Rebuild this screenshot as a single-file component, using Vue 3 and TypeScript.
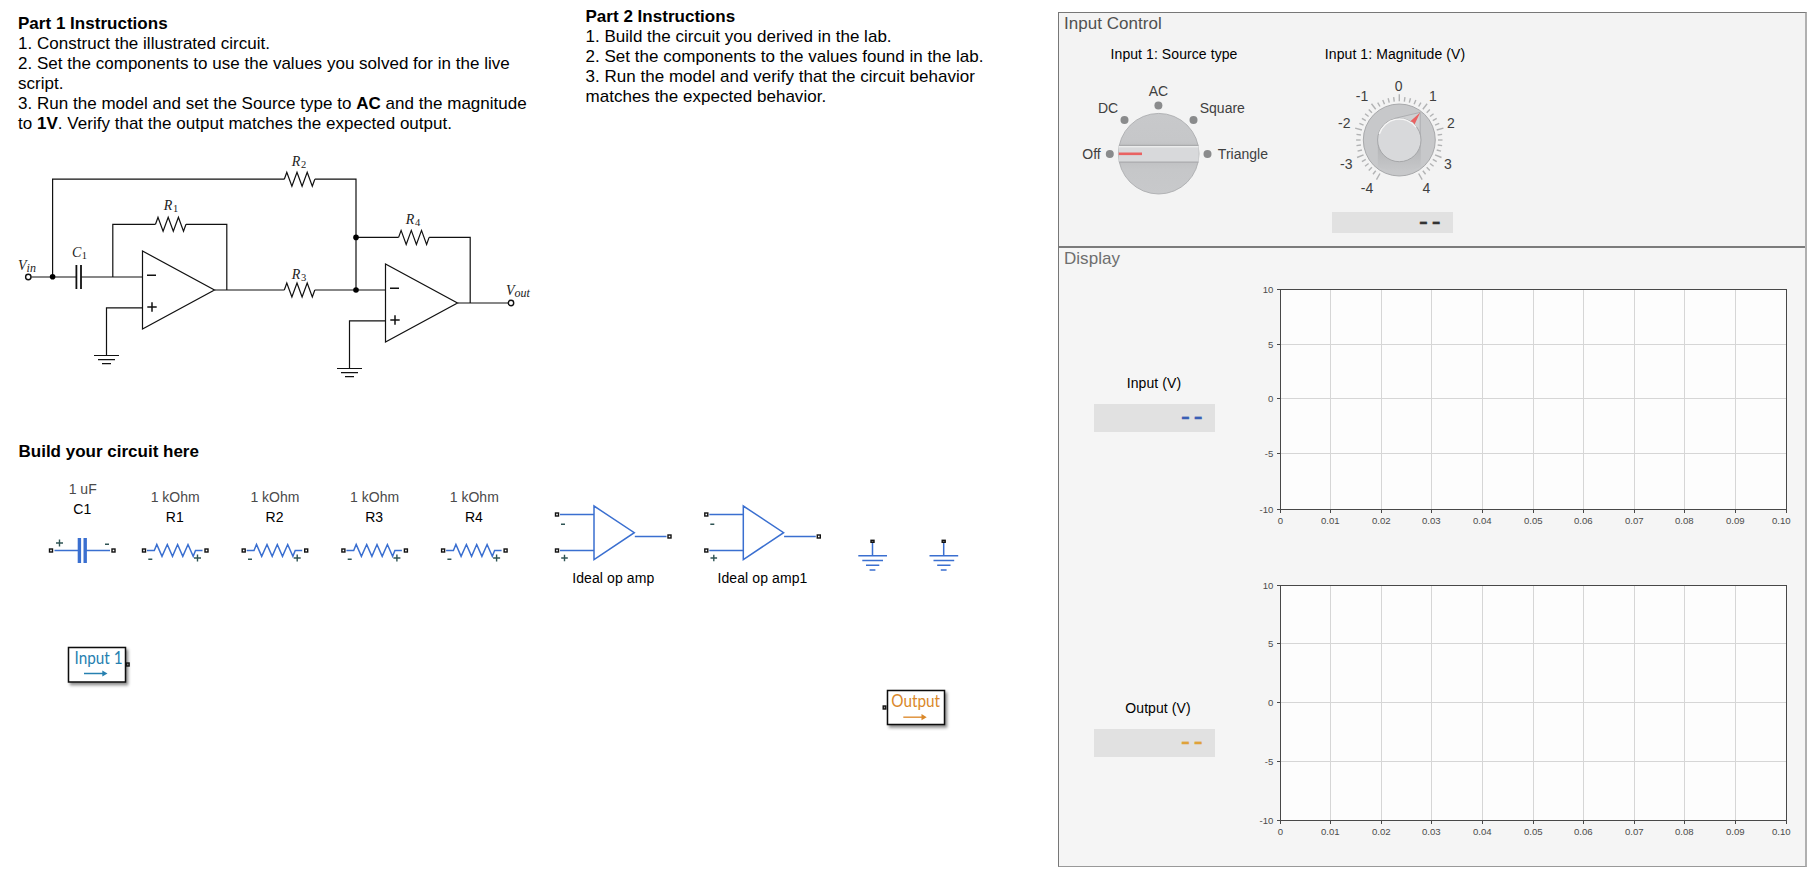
<script setup lang="ts">
interface Dial { text: string; x: number; y: number }
interface Plot { id: string; label: string; tone: string; rows: number[]; top: number; height: number }

const zig = (x: number, y: number) =>
  `M${x} ${y}l2.5 -7l5.1 14l5.1 -14l5.1 14l5.1 -14l5.1 14l2.5 -7`

const resistors = [
  { name: '1', x: 155.5, y: 224.3, tx: 163.7, ty: 209.8 },
  { name: '2', x: 284.3, y: 179.2, tx: 291.7, ty: 165.8 },
  { name: '3', x: 284.3, y: 290, tx: 291.7, ty: 278.5 },
  { name: '4', x: 398.6, y: 237.4, tx: 405.7, ty: 223.7 },
]
const stages = [
  { x: 0, y: 0 },
  { x: 243, y: 13 },
]

const kit = ['R1', 'R2', 'R3', 'R4'].map((name, i) => ({ name, dx: i * 99.7 }))
const amps = [
  { name: 'Ideal op amp', dx: 0, mid: 613.2, w: 82 },
  { name: 'Ideal op amp1', dx: 149.3, mid: 762.4, w: 90 },
]

const modes: Dial[] = [
  { text: 'Off', x: 1091.5, y: 159 },
  { text: 'DC', x: 1108, y: 113 },
  { text: 'AC', x: 1158.5, y: 96 },
  { text: 'Square', x: 1222.3, y: 113 },
  { text: 'Triangle', x: 1242.9, y: 159 },
]
const modeDots = [[1109.8, 154], [1124.5, 120], [1158.4, 105.6], [1193.5, 120], [1207.5, 154]]

const marks: Dial[] = [
  { text: '-4', x: 1367, y: 193 },
  { text: '-3', x: 1346.3, y: 169 },
  { text: '-2', x: 1344.3, y: 128 },
  { text: '-1', x: 1362, y: 101 },
  { text: '0', x: 1398.7, y: 91 },
  { text: '1', x: 1433, y: 101 },
  { text: '2', x: 1451, y: 128 },
  { text: '3', x: 1448, y: 169 },
  { text: '4', x: 1426.5, y: 193 },
]
const ticks = Array.from({ length: 41 }, (_, i) => ({
  angle: -150 + i * 7.5,
  len: i % 5 === 0 ? 7 : 4.5,
}))

const columns = [1280, 1330, 1381, 1431, 1482, 1533, 1583, 1634, 1684, 1735, 1786]
const xText = (i: number) => (i === 0 ? '0' : (i / 100).toFixed(2))
const yText = ['10', '5', '0', '-5', '-10']
const plots: Plot[] = [
  { id: 'in', label: 'Input (V)', tone: 'blue', rows: [289, 344, 398, 453, 509], top: 280, height: 250 },
  { id: 'out', label: 'Output (V)', tone: 'amber', rows: [585, 643, 702, 761, 820], top: 576, height: 265 },
]
</script>

<template>
  <main class="page">
    <section class="model">
      <div class="notes">
        <div class="note first">
          <b>Part 1 Instructions</b><br />
          1. Construct the illustrated circuit.<br />
          2. Set the components to use the values you solved for in the live<br />
          script.<br />
          3. Run the model and set the Source type to <b>AC</b> and the magnitude<br />
          to <b>1V</b>. Verify that the output matches the expected output.
        </div>
        <div class="note second">
          <b>Part 2 Instructions</b><br />
          1. Build the circuit you derived in the lab.<br />
          2. Set the components to the values found in the lab.<br />
          3. Run the model and verify that the circuit behavior<br />
          matches the expected behavior.
        </div>
      </div>

      <svg class="schematic" width="560" height="250" viewBox="0 140 560 250">
        <g class="wire">
          <path d="M31.3 277H76M81.3 277H142.5M52.6 277V179.2H284.3M314.8 179.2H356V290" />
          <path d="M112.8 277V224.3H155.5M186 224.3H226.8V290" />
          <path d="M214.5 290H284.3M314.8 290H385.5M356 237.4H398.6M429.1 237.4H470.2V303M457.5 303H508" />
          <path v-for="r in resistors" :key="r.name" :d="zig(r.x, r.y)" />
          <g v-for="(s, i) in stages" :key="i" :transform="`translate(${s.x} ${s.y})`">
            <path d="M142.5 251V329L214.5 290Z" />
            <path class="polarity" d="M147 275.3H156M147.3 307H156.7M152 302.3V311.7" />
            <path d="M142.5 307.8H106.5V355.5M94 355.5H119M98 359.6H115M102 363.7H111" />
          </g>
          <path class="plate" d="M76.4 265V289M81 265V289" />
          <circle cx="28.3" cy="277" r="2.7" />
          <circle cx="511" cy="303" r="2.7" />
        </g>
        <circle cx="52.6" cy="276.8" r="2.8" />
        <circle cx="356" cy="237.4" r="2.8" />
        <circle cx="356" cy="290" r="2.8" />
        <g class="math">
          <text v-for="r in resistors" :key="r.name" :x="r.tx" :y="r.ty">R<tspan class="sub num" dx="0.8" dy="2">{{ r.name }}</tspan></text>
          <text x="72" y="256.5">C<tspan class="sub num" dx="0.4" dy="2">1</tspan></text>
          <text x="18" y="270">V<tspan class="sub" dy="2">in</tspan></text>
          <text x="506" y="295">V<tspan class="sub" dy="2">out</tspan></text>
        </g>
      </svg>

      <h2>Build your circuit here</h2>

      <svg class="kit" width="1000" height="269" viewBox="0 470 1000 269">
        <defs>
          <filter id="shade" x="-20%" y="-20%" width="150%" height="160%">
            <feDropShadow dx="2" dy="2.5" stdDeviation="1.6" flood-color="#000" flood-opacity="0.45" />
          </filter>
        </defs>

        <g>
          <text class="value" x="82.7" y="494">1 uF</text>
          <text class="name" x="82.3" y="514">C1</text>
          <path class="part" d="M54.5 550.5H78M86 550.5H110" />
          <path class="slab" d="M79.4 538V563M85.2 538V563" />
          <rect class="port" x="49.5" y="549" width="3" height="3" />
          <rect class="port" x="112" y="549" width="3" height="3" />
          <path class="sign" d="M56 543H63M59.5 539.5V546.5M105 544.3H109" />
        </g>

        <g v-for="r in kit" :key="r.name" :transform="`translate(${r.dx} 0)`">
          <text class="value" x="175.2" y="502">1 kOhm</text>
          <text class="name" x="174.8" y="522">{{ r.name }}</text>
          <path class="part" d="M147 550.5H154.3L156.8 544.5L162 556.3L167.3 544.5L172.5 556.3L177.6 544.5L182.8 556.3L188 544.5L193.2 556.3L195.5 550.5H202.5" />
          <rect class="port" x="142.5" y="549" width="3" height="3" />
          <rect class="port" x="205" y="549" width="3" height="3" />
          <path class="sign" d="M148.3 559.2H152.3M194 558H201M197.5 554.5V561.5" />
        </g>

        <g v-for="a in amps" :key="a.name">
          <g :transform="`translate(${a.dx} 0)`">
            <path class="part" d="M560 514.4H594M560 550.4H594M594 506V559.5L634.3 532.7ZM634.8 536.4H666.5" />
            <rect class="port" x="555.5" y="513" width="3" height="3" />
            <rect class="port" x="555.5" y="549" width="3" height="3" />
            <rect class="port" x="668" y="535" width="3" height="3" />
            <path class="sign" d="M561 524.3H565M561.2 558H567.8M564.5 554.7V561.3" />
          </g>
          <text class="name" :x="a.mid" y="583.3" :textLength="a.w">{{ a.name }}</text>
        </g>

        <g v-for="dx in [0, 71.2]" :key="dx" :transform="`translate(${dx} 0)`">
          <path class="part" d="M872.5 543V555.7M858.3 555.7H887M862.3 560.5H883M866 565.3H879.3M869.6 570H875.4" />
          <rect class="port dim" x="871" y="540.3" width="3" height="2" />
        </g>

        <g>
          <rect class="block" x="68.5" y="647.5" width="57" height="34.5" filter="url(#shade)" />
          <rect class="port dim" x="126.5" y="663" width="2.6" height="3" />
          <text class="tag sky" x="74.5" y="664.3" textLength="48" lengthAdjust="spacingAndGlyphs">Input 1</text>
          <path class="arrow sky" d="M84 673.5H104" />
          <path class="sky" d="M102.3 670.4L107.5 673.5L102.3 676.6Z" />
        </g>
        <g>
          <rect class="block" x="887.5" y="690.5" width="57" height="34" filter="url(#shade)" />
          <rect class="port dim" x="883.2" y="706" width="2.6" height="3" />
          <text class="tag orange" x="891.3" y="707" textLength="48.7" lengthAdjust="spacingAndGlyphs">Output</text>
          <path class="arrow orange" d="M903.3 717.2H923" />
          <path class="orange" d="M921.5 714.1L926.7 717.2L921.5 720.3Z" />
        </g>
      </svg>
    </section>

    <aside class="dash">
      <section class="panel control">
        <h3>Input Control</h3>
        <div class="widgets">
          <div class="widget source">
            <p>Input 1: Source type</p>
            <svg width="210" height="146" viewBox="1069 62 210 146">
              <defs>
                <linearGradient id="upper" x1="0" y1="0" x2="0" y2="1">
                  <stop offset="0" stop-color="#c8c9cb" />
                  <stop offset="0.34" stop-color="#c6c7c9" />
                  <stop offset="0.44" stop-color="#bebfc1" />
                  <stop offset="0.6" stop-color="#c1c2c4" />
                  <stop offset="0.7" stop-color="#c6c7c9" />
                  <stop offset="1" stop-color="#c8c9cb" />
                </linearGradient>
              </defs>
              <circle v-for="(d, i) in modeDots" :key="i" class="dot" :cx="d[0]" :cy="d[1]" r="4" />
              <circle cx="1158.7" cy="153.7" r="40.3" fill="url(#upper)" stroke="#a6a7a9" stroke-width="0.8" />
              <rect x="1118.7" y="145.5" width="80" height="16.5" fill="#d8d9db" />
              <path d="M1119 145.4H1198.4M1119 162.2H1198.4" stroke="#aaabad" stroke-width="1.2" />
              <path d="M1119 146.8H1198.4" stroke="#f4f4f4" />
              <path d="M1118.8 153.8H1142" stroke="#e96262" stroke-width="2.6" />
              <text v-for="m in modes" :key="m.text" class="dial" :x="m.x" :y="m.y">{{ m.text }}</text>
            </svg>
          </div>
          <div class="widget magnitude">
            <p>Input 1: Magnitude (V)</p>
            <svg width="180" height="146" viewBox="1305 62 180 146">
              <defs>
                <linearGradient id="drop" x1="0" y1="0" x2="0" y2="1">
                  <stop offset="0" stop-color="#b2b3b5" />
                  <stop offset="1" stop-color="#c7c8ca" />
                </linearGradient>
              </defs>
              <path
                v-for="t in ticks" :key="t.angle" class="tick"
                :d="`M1399.3 101.3V${101.3 - t.len}`"
                :transform="`rotate(${t.angle} 1399.3 140)`"
              />
              <circle cx="1399.3" cy="140" r="36" fill="#c7c8ca" stroke="#a2a3a5" stroke-width="0.9" />
              <path d="M1377.8 142H1420.8V167Q1399 176 1377.8 167Z" fill="url(#drop)" />
              <path d="M1395 118.3L1420.2 112.4V142Z" fill="#cfd0d2" stroke="#a6a7a9" stroke-width="0.8" />
              <circle cx="1399.3" cy="140" r="21.7" fill="#d8d9db" stroke="#a2a3a5" stroke-width="0.9" />
              <path d="M1379.3 134A21 21 0 0 1 1416 127.2" fill="none" stroke="#f5f5f5" stroke-width="1.4" />
              <path d="M1420.2 112.6L1410.4 121.2Q1413.4 121.6 1414.5 124.6Z" fill="#e96262" />
              <text v-for="m in marks" :key="m.text" class="dial" :x="m.x" :y="m.y">{{ m.text }}</text>
            </svg>
            <output class="readout small">--</output>
          </div>
        </div>
      </section>

      <section class="panel display">
        <h3>Display</h3>
        <div v-for="p in plots" :key="p.id" class="scope" :class="p.id">
          <div class="meter">
            <p>{{ p.label }}</p>
            <output class="readout" :class="p.tone">--</output>
          </div>
          <svg width="550" :height="p.height" :viewBox="`1250 ${p.top} 550 ${p.height}`">
            <rect x="1280" :y="p.rows[0]" width="506" :height="p.rows[4] - p.rows[0]" fill="#fdfdfd" />
            <g class="grid">
              <path v-for="x in columns.slice(1, -1)" :key="x" :d="`M${x + 0.5} ${p.rows[0]}V${p.rows[4]}`" />
              <path v-for="y in p.rows.slice(1, -1)" :key="y" :d="`M1280 ${y + 0.5}H1786`" />
            </g>
            <g class="axis">
              <path :d="`M1280.5 ${p.rows[0] + 0.5}H1786.5V${p.rows[4] + 0.5}H1280.5Z`" />
              <path v-for="x in columns" :key="x" :d="`M${x + 0.5} ${p.rows[4]}v4`" />
              <path v-for="y in p.rows" :key="y" :d="`M1277 ${y + 0.5}h4`" />
            </g>
            <text
              v-for="(x, i) in columns" :key="x" class="scale mid"
              :x="i === 10 ? x - 4.7 : x + 0.3" :y="p.rows[4] + 15.3"
            >{{ xText(i) }}</text>
            <text v-for="(y, i) in p.rows" :key="y" class="scale end" x="1273.4" :y="y + 4">{{ yText[i] }}</text>
          </svg>
        </div>
      </section>
    </aside>
  </main>
</template>

<style>
html, body { background: #fff; overflow: hidden; }
</style>

<style scoped>
.page {
  display: flex;
  width: 1816px;
  height: 874px;
  overflow: hidden;
  background: #fff;
  color: #000;
  font-family: "Liberation Sans", Arial, sans-serif;
}
h2, h3, p { margin: 0; }
svg { display: block; }

.model { width: 1058px; flex: none; }
.notes {
  display: grid;
  grid-template-columns: 568px 1fr;
  height: 140px;
  line-height: 20px;
  white-space: nowrap;
  font-size: 17px;
  letter-spacing: 0.02px;
}
.note.first { padding: 13.5px 0 0 18px; }
.note.second { padding: 6.5px 0 0 17.5px; }
h2 { margin: 52px 0 8px 18.5px; font-size: 17px; line-height: 20px; }

.wire { fill: none; stroke: #111; stroke-width: 1.2; }
.wire .polarity { stroke-width: 1.5; }
.wire circle { fill: #fff; stroke-width: 1.4; }
.wire .plate { stroke-width: 1.8; }
.math { font: italic 14px "Liberation Serif", "Times New Roman", serif; fill: #222; }
.math .sub { font-size: 12px; }
.math .num { font-style: normal; font-size: 10.5px; }

.value, .name { font-size: 14px; text-anchor: middle; }
.value { fill: #4a4a4a; }
.part { fill: none; stroke: #3a6fd0; stroke-width: 1.5; }
.slab { stroke: #3a6fd0; stroke-width: 3.4; }
.port { fill: #fff; stroke: #111; stroke-width: 1.4; }
.port.dim { fill: #999; }
.sign { fill: none; stroke: #2f5454; stroke-width: 1.4; }
.block { fill: #fff; stroke: #0a0a0a; stroke-width: 1.5; }
.tag { font: 16.5px Lato, sans-serif; }
.sky { fill: #2680b0; }
.orange { fill: #da8829; }
.arrow { fill: none; stroke-width: 1.5; }
.arrow.sky { stroke: #2680b0; }
.arrow.orange { stroke: #e09440; }

.dash {
  display: flex;
  flex-direction: column;
  width: 749px;
  height: 855px;
  margin-top: 12px;
  box-sizing: border-box;
  border: 1px solid #777;
  border-right: 2px solid #b0b0b0;
  border-bottom-color: #999;
}
.panel h3 {
  padding: 1px 0 0 5px;
  font-size: 17px;
  line-height: 20px;
  font-weight: 400;
  letter-spacing: 0.03px;
}
.control { height: 233px; background: #f3f3f3; border-bottom: 2px solid #7b7b7b; color: #505050; }
.display { flex: 1; background: #f5f5f5; color: #6e6e6e; }
.widgets { display: flex; gap: 26px; padding: 12px 0 0 10px; }
.widget p, .meter p { font-size: 14px; line-height: 16px; letter-spacing: 0.08px; text-align: center; color: #000; }
.source { width: 210px; }
.magnitude { width: 180px; }
.dial { font-size: 14px; text-anchor: middle; fill: #404040; }
.dot { fill: #8a8b8c; }
.tick { stroke: #b2b3b4; stroke-width: 1.4; }

.readout {
  display: block;
  box-sizing: border-box;
  width: 121px;
  height: 28px;
  padding-right: 8.5px;
  background: #e1e1e1;
  color: #333;
  font-size: 28px;
  line-height: 24px;
  letter-spacing: 3.6px;
  text-align: right;
  -webkit-text-stroke: 0.3px currentColor;
}
.readout.small { height: 21px; margin: 4px 0 0 27px; line-height: 18px; }
.readout.blue { color: #3a5fb5; }
.readout.amber { color: #dfa23a; }

.scope { display: flex; gap: 35px; padding-left: 35px; }
.scope.in { margin-top: 11px; }
.scope.out { margin-top: 46px; }
.meter { width: 121px; }
.in .meter { padding-top: 95px; }
.out .meter { padding-top: 124px; }
.meter .readout { margin-top: 13px; }
.meter p { padding-right: 1px; }
.out .meter p { padding: 0 0 0 7px; }
.grid path { stroke: #d6d6d6; shape-rendering: crispEdges; }
.axis path { fill: none; stroke: #484848; shape-rendering: crispEdges; }
.scale { font-size: 9.6px; fill: #4c4c4c; }
.mid { text-anchor: middle; }
.end { text-anchor: end; }
</style>
